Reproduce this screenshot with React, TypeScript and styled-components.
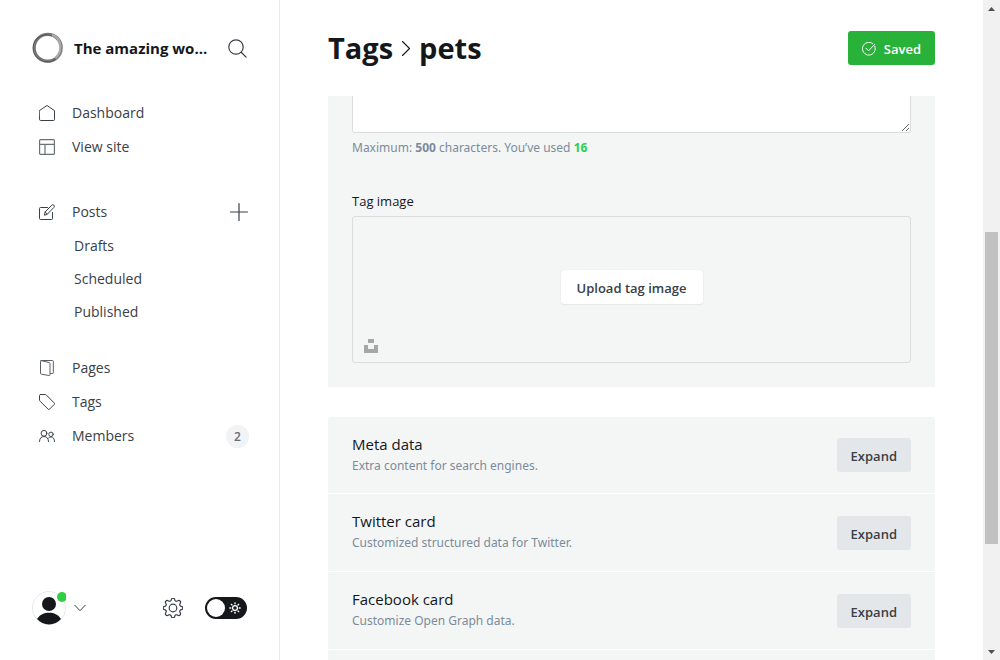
import React from 'react';
import styled, { createGlobalStyle, css } from 'styled-components';

const GlobalStyle = createGlobalStyle`
  *, *::before, *::after { box-sizing: border-box; }
  body {
    margin: 0;
    background: #fff;
    color: #15171a;
    font-family: "Segoe UI", "Open Sans", "Noto Sans", sans-serif;
    font-size: 13px;
    line-height: 20px;
  }
  button, textarea { font: inherit; }
  h1, h2, h3, p, ul { margin: 0; padding: 0; }
  ul { list-style: none; }
  svg { display: block; flex: none; }
`;

const Shell = styled.div`
  display: grid;
  grid-template-columns: 280px minmax(0, 1fr) 17px;
  height: 100vh;
  overflow: hidden;
`;

const Sidebar = styled.aside`
  display: flex;
  flex-direction: column;
  border-right: 1px solid #e5e9ed;
`;

const Brand = styled.div`
  display: flex;
  align-items: center;
  height: 32px;
  margin: 32px;
`;

const SiteName = styled.span`
  flex: 1;
  margin-left: 10px;
  font-size: 15px;
  font-weight: 700;
  white-space: nowrap;
`;

const IconButton = styled.button`
  display: flex;
  align-items: center;
  justify-content: center;
  padding: 0;
  border: 0;
  background: none;
  color: #394047;
`;

const NavGroup = styled.ul<{ $gap?: number }>`
  margin-bottom: ${(p) => p.$gap ?? 0}px;
  padding: 0 30px 0 39px;
`;

const NavItem = styled.li<{ $sub?: boolean }>`
  display: flex;
  align-items: center;
  justify-content: space-between;
  height: ${(p) => (p.$sub ? 33 : 34)}px;
  padding-left: ${(p) => (p.$sub ? 35 : 0)}px;
`;

const NavLink = styled.a`
  display: flex;
  align-items: center;
  gap: 17px;
  color: #394047;
  font-size: 14px;
  text-decoration: none;
`;

const Count = styled.span`
  min-width: 23px;
  height: 23px;
  border-radius: 12px;
  background: #f1f3f5;
  color: #626d79;
  font-size: 12px;
  font-weight: 600;
  line-height: 23px;
  text-align: center;
`;

const SidebarFooter = styled.footer`
  display: flex;
  align-items: center;
  height: 34px;
  margin: auto 32px 35px;
`;

const UserButton = styled(IconButton)`
  gap: 8px;
  margin-right: auto;
`;

const ThemeSwitch = styled.label`
  display: flex;
  align-items: center;
  width: 42px;
  height: 22px;
  margin-left: 22px;
  padding: 2px;
  border-radius: 11px;
  background: #15171a;
  color: #fff;
`;

const SwitchInput = styled.input`
  appearance: none;
  width: 18px;
  height: 18px;
  margin: 0 4px 0 0;
  border-radius: 50%;
  background: #fff;
`;

const Main = styled.main`
  display: flex;
  flex-direction: column;
  min-width: 0;
  padding: 0 48px;
  overflow: hidden;
`;

const PageHeader = styled.header`
  display: flex;
  flex: none;
  align-items: center;
  justify-content: space-between;
  height: 96px;
`;

const Title = styled.h1`
  display: flex;
  align-items: center;
  gap: 8px;
  font-size: 29px;
  font-weight: 700;
  line-height: 36px;
`;

const TitleLink = styled.a`
  color: inherit;
  text-decoration: none;
`;

const buttonTones = {
  green: css`background: #29b239; color: #fff;`,
  white: css`background: #fff; color: #394047; box-shadow: 0 0 1px rgba(0, 0, 0, .15), 0 1px 2px rgba(0, 0, 0, .05);`,
  grey: css`background: #e3e7ea; color: #394047;`,
};

const Button = styled.button<{ $tone: keyof typeof buttonTones }>`
  display: flex;
  flex: none;
  align-items: center;
  justify-content: center;
  gap: 8px;
  height: 34px;
  padding: 2px 14px 0;
  border: 0;
  border-radius: 3px;
  font-size: 13px;
  font-weight: 600;
  ${(p) => buttonTones[p.$tone]}
`;

const SettingsPanel = styled.section`
  flex: none;
  margin-bottom: 30px;
  padding: 0 24px 24px;
  background: #f4f6f6;
`;

const Description = styled.textarea`
  display: block;
  width: 100%;
  height: 37px;
  padding: 0 12px;
  border: 1px solid #dadddd;
  border-top: 0;
  border-radius: 0 0 3px 3px;
  outline: 0;
  resize: vertical;
`;

const SmallText = styled.p`
  color: #7c8b9a;
  font-family: "Segoe UI", "Noto Sans", "Open Sans", sans-serif;
  font-size: 12px;
  line-height: 22px;
`;

const Hint = styled(SmallText)`
  margin: 4px 0 32px;
`;

const Used = styled.strong`
  color: #30cf43;
`;

const FieldLabel = styled.h2`
  margin-bottom: 5px;
  font-size: 13px;
  font-weight: 500;
`;

const Uploader = styled.div`
  display: grid;
  grid-template-rows: 1fr auto 1fr;
  justify-items: center;
  height: 147px;
  padding: 4px 11px 9px;
  border: 1px solid #dadddd;
  border-radius: 3px;
`;

const UploadButton = styled(Button)`
  grid-row: 2;
  min-width: 142px;
`;

const UnsplashButton = styled(IconButton)`
  grid-row: 3;
  align-self: end;
  justify-self: start;
  color: #a3a7a6;
`;

const Sections = styled.section`
  display: flex;
  flex: none;
  flex-direction: column;
  gap: 1px;
`;

const SectionRow = styled.div`
  display: flex;
  align-items: center;
  justify-content: space-between;
  height: 77px;
  padding: 0 24px;
  background: #f4f6f6;

  &:first-child {
    height: 76px;
    border-radius: 3px 3px 0 0;
  }
`;

const SectionTitle = styled.h3`
  font-size: 15px;
  font-weight: 500;
  line-height: 21px;
`;

const Scrollbar = styled.div`
  display: flex;
  flex-direction: column;
  align-items: center;
  background: #f1f1f1;
  color: #505050;
`;

const ScrollArrow = styled.span`
  display: flex;
  align-items: center;
  justify-content: center;
  height: 17px;
`;

const ScrollTrack = styled.div`
  display: grid;
  flex: 1;
  grid-template-rows: 215fr 312fr 99fr;
`;

const ScrollThumb = styled.div`
  grid-row: 2;
  width: 13px;
  background: #c1c1c1;
`;

const line = { fill: 'none', stroke: 'currentColor', strokeLinecap: 'round', strokeLinejoin: 'round' } as const;

const Glyph = ({ size = 16, children }: { size?: number; children: React.ReactNode }) => (
  <svg width={size} height={size} viewBox={`0 0 ${size} ${size}`} {...line} aria-hidden="true">
    {children}
  </svg>
);

const HomeIcon = () => (
  <Glyph><path d="M.5 5.600 8 .5l7.500 5.100V14.500a1 1 0 0 1-1 1h-13a1 1 0 0 1-1-1z" /></Glyph>
);
const LayoutIcon = () => (
  <Glyph>
    <g stroke="#6b7075" strokeWidth="1.200">
      <rect x=".6" y=".6" width="14.800" height="14.800" rx="1" /><path d="M.6 5.400h14.800M6 5.400v10" />
    </g>
  </Glyph>
);
const PostsIcon = () => (
  <Glyph>
    <path d="M8.500 3.500H1.500a1 1 0 0 0-1 1v10a1 1 0 0 0 1 1h11a1 1 0 0 0 1-1V8.500" />
    <path d="m5.500 10.800.6-2.800L12.700 1.200a1.500 1.500 0 0 1 2.200 2.200L8.300 10.200zM6.200 8l2.100 2.100" />
  </Glyph>
);
const PagesIcon = () => (
  <Glyph>
    <g stroke="#5a6066">
      <path d="M11.500 13.500h2a.8.8 0 0 0 .8-.8V1.300a.8.800 0 0 0-.8-.8H2.300a.8.800 0 0 0-.8.8v11.900a1 1 0 0 0 .8 1l7.600 1.300a.9.900 0 0 0 1.100-.9V3.500a1 1 0 0 0-.8-1L2 .6" />
    </g>
  </Glyph>
);
const TagIcon = () => (
  <Glyph><path d="M1.500.5H6a2 2 0 0 1 1.300.5l8 8a1 1 0 0 1 0 1.400l-4.800 4.800a1 1 0 0 1-1.400 0l-8-8A2 2 0 0 1 .5 6V1.500a1 1 0 0 1 1-1z" /></Glyph>
);
const MembersIcon = () => (
  <Glyph>
    <circle cx="5" cy="5.300" r="2.900" /><circle cx="12" cy="6.300" r="2.200" />
    <path d="M.5 13.500c0-3 1.700-5 4.500-5s4.500 2 4.500 5M9.600 10c.7-.7 1.500-1 2.400-1 2.200 0 3.500 1.700 3.500 4.500" />
  </Glyph>
);
const SearchIcon = () => (
  <Glyph size={19}><circle cx="8" cy="8" r="7.200" strokeWidth="1.200" /><path d="m13.200 13.200 4.900 4.900" strokeWidth="1.300" /></Glyph>
);
const PlusIcon = () => (
  <Glyph size={20}><path d="M10 1.500v17M1.500 10h17" strokeWidth="1.200" /></Glyph>
);

const LogoIcon = () => (
  <svg width="32" height="32" viewBox="0 0 32 32" fill="none" aria-hidden="true">
    <circle cx="15.700" cy="15.900" r="13.500" stroke="#8a8a8a" strokeWidth="3.200" />
    <ellipse cx="16.300" cy="15.300" rx="13.700" ry="13" stroke="#555" strokeOpacity=".6" transform="rotate(-35 16 15)" />
    <ellipse cx="15.200" cy="16.300" rx="14" ry="13.300" stroke="#333" strokeOpacity=".6" transform="rotate(30 15 16)" />
    <path d="M20 3c5 1.700 8.300 6 8.500 12.300-.1 4.700-2.200 8.400-5.200 11" stroke="#aaa" strokeWidth="2.500" />
  </svg>
);

const AvatarIcon = () => (
  <svg width="34" height="34" viewBox="0 0 34 34" aria-hidden="true">
    <circle cx="17" cy="17" r="16.500" fill="#fff" stroke="#e5e9ed" />
    <circle cx="17" cy="13" r="7" fill="#15171a" />
    <path d="M5 28c3-4.700 7-6.300 12-6.300S26 23.300 29 28c-3 3.600-7.300 5.400-12 5.400S8 31.600 5 28z" fill="#15171a" />
    <circle cx="30" cy="6" r="5" fill="#30cf43" />
  </svg>
);

const rays = [0, 45, 90, 135, 180, 225, 270, 315];

const GearIcon = () => (
  <Glyph size={20}>
    <circle cx="10" cy="10" r="3.800" strokeWidth="1.200" />
    <path strokeWidth="1.200" d="M8.300 1.500a1.750 1.750 0 0 1 3.400 0l.2.700a1.600 1.600 0 0 0 2.200.9l.8-.4a1.750 1.750 0 0 1 2.400 2.400l-.4.800a1.600 1.600 0 0 0 .9 2.200l.7.200a1.750 1.750 0 0 1 0 3.400l-.7.200a1.600 1.600 0 0 0-.9 2.200l.4.800a1.750 1.750 0 0 1-2.400 2.400l-.8-.4a1.600 1.600 0 0 0-2.200.9l-.2.700a1.750 1.750 0 0 1-3.400 0l-.2-.7a1.600 1.600 0 0 0-2.200-.9l-.8.400a1.750 1.750 0 0 1-2.400-2.400l.4-.8a1.600 1.600 0 0 0-.9-2.200l-.7-.2a1.750 1.750 0 0 1 0-3.400l.7-.2a1.600 1.600 0 0 0 .9-2.200l-.4-.8a1.750 1.750 0 0 1 2.400-2.400l.8.400a1.600 1.600 0 0 0 2.200-.9z" />
  </Glyph>
);

const SunIcon = () => (
  <Glyph size={12}>
    <circle cx="6" cy="6" r="2.400" strokeWidth="1.300" />
    {rays.map((a) => <path key={a} d="M6 .8v1" strokeWidth="1.300" transform={`rotate(${a} 6 6)`} />)}
  </Glyph>
);

type Entry = { label: string; Icon: () => React.JSX.Element };

const topLinks: Entry[] = [
  { label: 'Dashboard', Icon: HomeIcon },
  { label: 'View site', Icon: LayoutIcon },
];

const sections = [
  { title: 'Meta data', text: 'Extra content for search engines.' },
  { title: 'Twitter card', text: 'Customized structured data for Twitter.' },
  { title: 'Facebook card', text: 'Customize Open Graph data.' },
];

const NavEntry = ({ label, Icon, children }: Entry & { children?: React.ReactNode }) => (
  <NavItem>
    <NavLink href="#"><Icon />{label}</NavLink>
    {children}
  </NavItem>
);

export default function App() {
  return (
    <>
      <GlobalStyle />
      <Shell>
        <Sidebar>
          <Brand>
            <LogoIcon />
            <SiteName>The amazing wo...</SiteName>
            <IconButton aria-label="Search"><SearchIcon /></IconButton>
          </Brand>
          <nav>
            <NavGroup $gap={31}>
              {topLinks.map((l) => <NavEntry key={l.label} {...l} />)}
            </NavGroup>
            <NavGroup $gap={23}>
              <NavEntry label="Posts" Icon={PostsIcon}>
                <IconButton aria-label="New post"><PlusIcon /></IconButton>
              </NavEntry>
              {['Drafts', 'Scheduled', 'Published'].map((s) => (
                <NavItem key={s} $sub><NavLink href="#">{s}</NavLink></NavItem>
              ))}
            </NavGroup>
            <NavGroup>
              <NavEntry label="Pages" Icon={PagesIcon} />
              <NavEntry label="Tags" Icon={TagIcon} />
              <NavEntry label="Members" Icon={MembersIcon}><Count>2</Count></NavEntry>
            </NavGroup>
          </nav>
          <SidebarFooter>
            <UserButton aria-label="User menu">
              <AvatarIcon />
              <svg width="12" height="8" viewBox="0 0 12 8" {...line}><path d="m.8 1.200 5.200 5.500 5.200-5.500" /></svg>
            </UserButton>
            <IconButton aria-label="Settings"><GearIcon /></IconButton>
            <ThemeSwitch>
              <SwitchInput type="checkbox" role="switch" aria-label="Night shift" />
              <SunIcon />
            </ThemeSwitch>
          </SidebarFooter>
        </Sidebar>

        <Main>
          <PageHeader>
            <Title>
              <TitleLink href="#">Tags</TitleLink>
              <svg width="10" height="16" viewBox="0 0 10 16" {...line}><path d="m1.500 1.500 7 7-7 7" strokeWidth="1.100" /></svg>
              pets
            </Title>
            <Button $tone="green">
              <Glyph size={14}>
                <path d="M12.800 4.200A6.400 6.400 0 1 1 10.800 1.600M4 6.300l2.500 2.500 6.300-6.500" />
              </Glyph>
              Saved
            </Button>
          </PageHeader>

          <SettingsPanel>
            <Description aria-label="Description" />
            <Hint>Maximum: <strong>500</strong> characters. You’ve used <Used>16</Used></Hint>
            <FieldLabel>Tag image</FieldLabel>
            <Uploader>
              <UploadButton $tone="white">Upload tag image</UploadButton>
              <UnsplashButton aria-label="Unsplash">
                <svg width="14" height="14" viewBox="0 0 14 14" fill="currentColor"><path d="M4 0h6v4H4zM0 6h4v4h6V6h4v8H0z" /></svg>
              </UnsplashButton>
            </Uploader>
          </SettingsPanel>

          <Sections>
            {sections.map((s) => (
              <SectionRow key={s.title}>
                <div>
                  <SectionTitle>{s.title}</SectionTitle>
                  <SmallText>{s.text}</SmallText>
                </div>
                <Button $tone="grey">Expand</Button>
              </SectionRow>
            ))}
            <SectionRow />
          </Sections>
        </Main>

        <Scrollbar aria-hidden="true">
          <ScrollArrow><svg width="7" height="4" viewBox="0 0 7 4" fill="currentColor"><path d="M0 4 3.500 0 7 4z" /></svg></ScrollArrow>
          <ScrollTrack><ScrollThumb /></ScrollTrack>
          <ScrollArrow><svg width="7" height="4" viewBox="0 0 7 4" fill="currentColor"><path d="M0 0 3.500 4 7 0z" /></svg></ScrollArrow>
        </Scrollbar>
      </Shell>
    </>
  );
}
